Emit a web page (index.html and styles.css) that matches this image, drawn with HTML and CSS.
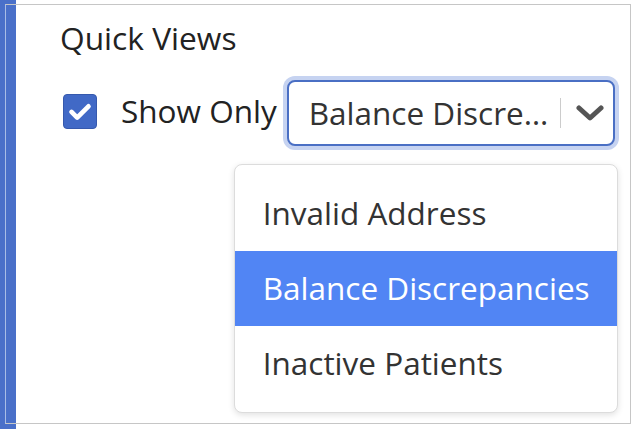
FILE: index.html
```html
<!DOCTYPE html>
<html lang="en">
<head>
<meta charset="utf-8">
<title>Quick Views</title>
<link rel="stylesheet" href="styles.css">
</head>
<body>
<div class="panel">
  <h2 class="title">Quick Views</h2>
  <div class="row">
    <span class="checkbox" role="checkbox" aria-checked="true">
      <svg viewBox="0 0 34 34" width="34" height="34" aria-hidden="true"><polyline points="8,18 14,24 26,12" fill="none" stroke="#fff" stroke-width="5" stroke-linecap="round" stroke-linejoin="round"/></svg>
    </span>
    <span class="label">Show Only</span>
    <div class="select-wrap">
      <div class="select">
        <span class="value">Balance Discrepancies</span>
        <span class="sep"></span>
        <svg class="chev" viewBox="0 0 28 16" width="28" height="16" aria-hidden="true"><polyline points="3,3 14,13 25,3" fill="none" stroke="#555" stroke-width="5" stroke-linecap="round" stroke-linejoin="round"/></svg>
      </div>
      <ul class="menu">
        <li class="item">Invalid Address</li>
        <li class="item active">Balance Discrepancies</li>
        <li class="item">Inactive Patients</li>
      </ul>
    </div>
  </div>
</div>
</body>
</html>
```
FILE: styles.css
```css
html, body {
  margin: 0;
  height: 100%;
}
body {
  background: linear-gradient(to right, #4a70c9 16px, #ffffff 16px);
  font-family: "Open Sans", "Liberation Sans", sans-serif;
  color: #222;
  padding: 4px 3px 5px 5px;
  box-sizing: border-box;
  overflow: hidden;
}
.panel {
  height: 100%;
  box-sizing: border-box;
  border: 1px solid #c6c6c6;
  border-left-color: #a9bde6;
  padding: 11px 0 0 54px;
}
.title {
  margin: 0;
  font-size: 31.7px;
  font-weight: 400;
  line-height: 44px;
  color: #222;
}
.row {
  display: flex;
  align-items: center;
  margin-top: 20px;
  margin-left: 3px;
}
.checkbox {
  width: 34px;
  height: 35px;
  box-sizing: border-box;
  background: #4169c6;
  border: 1px solid #3659ad;
  border-radius: 4px;
  display: flex;
  align-items: center;
  justify-content: center;
  margin-bottom: 4px;
}
.checkbox svg {
  display: block;
}
.label {
  font-size: 31.5px;
  line-height: 44px;
  margin-left: 24px;
  margin-bottom: 5px;
  color: #222;
}
.select-wrap {
  position: relative;
  margin-left: 10px;
}
.select {
  width: 328px;
  height: 66px;
  box-sizing: border-box;
  border: 2px solid #4a6fc4;
  border-radius: 8px;
  box-shadow: 0 0 0 4px #c6d3f1;
  padding: 0 9px 0 20px;
  display: flex;
  align-items: center;
  background: #fff;
}
.value {
  width: 250px;
  flex: none;
  white-space: nowrap;
  overflow: hidden;
  text-overflow: ellipsis;
  font-size: 31.5px;
  line-height: 44px;
  color: #333;
}
.sep {
  width: 1px;
  height: 30px;
  background: #cccccc;
  margin-left: 1px;
}
.chev {
  display: block;
  margin-left: 15px;
}
.menu {
  position: absolute;
  top: calc(100% + 18px);
  right: -3px;
  width: 384px;
  box-sizing: border-box;
  margin: 0;
  padding: 11px 0;
  list-style: none;
  background: #fff;
  border: 1px solid #dcdcdc;
  border-radius: 8px;
  box-shadow: 0 2px 6px rgba(0, 0, 0, 0.12);
}
.item {
  height: 75px;
  display: flex;
  align-items: center;
  padding-left: 28px;
  font-size: 31.5px;
  color: #333;
  padding-bottom: 2px;
  box-sizing: border-box;
}
.item.active {
  background: #5185f4;
  color: #fff;
}
```
